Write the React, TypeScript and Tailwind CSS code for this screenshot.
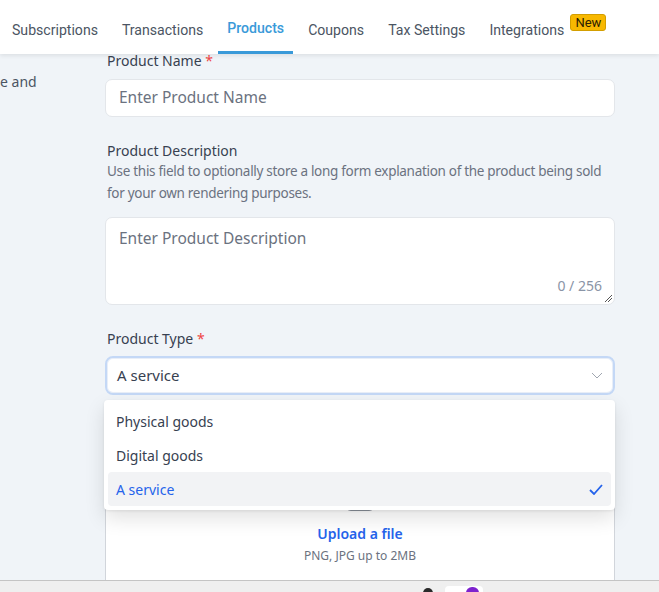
import React from "react";

const tabs = ["Subscriptions", "Transactions", "Products", "Coupons", "Tax Settings", "Integrations"];

export default function App() {
  return (
    <div className="relative h-[592px] w-[659px] overflow-hidden bg-[#f0f4f8]" style={{ fontFamily: '"Noto Sans", sans-serif' }}>
      <nav
        className="relative z-10 flex h-[54px] items-stretch bg-white pl-[3px] shadow-[0_2px_4px_rgba(0,0,0,0.08)] gap-[6px]"
        style={{ fontFamily: "Roboto, sans-serif" }}
      >
        {tabs.map((t) => (
          <div
            key={t}
            className={
              "relative flex items-center px-[9px] text-[14.1px] " +
              (t === "Products" ? "font-medium text-[#3a9ad9] border-b-[3px] border-[#3a9ad9] pt-[6px]" : "text-[#4b5563] pt-[8px]")
            }
          >
            {t}
            {t === "Integrations" && (
              <span className="absolute left-[90px] top-[14px] rounded-[3px] border border-[#d39e00] bg-[#f8b800] px-[4px] text-[13px] leading-[15px] text-[#2b2100]">
                New
              </span>
            )}
          </div>
        ))}
      </nav>

      <main className="relative mt-[-3px] flex">
        <div className="w-[105px] shrink-0 overflow-hidden">
          <div className="mt-[20px] whitespace-nowrap text-[14px] leading-[22px] text-[#4b5563]">e and</div>
        </div>
        <div className="w-[510px] shrink-0">
          <label className="block pl-[2px] text-[14px] leading-[20px] text-[#374151]">
            Product Name <span className="text-[#ef4444]">*</span>
          </label>
          <div className="mt-[8px] flex h-[38px] items-center rounded-[7px] border border-[#e3e6ea] bg-white px-[13px] text-[15.5px] text-[#6b7280]">
            Enter Product Name
          </div>

          <label className="mt-[24px] block pl-[2px] text-[14px] leading-[20px] text-[#374151]">Product Description</label>
          <p className="mt-[-1px] pl-[2px] text-[13.5px] leading-[22px] tracking-[-0.3px] text-[#6b7280]">
            Use this field to optionally store a long form explanation of the product being sold for your own rendering purposes.
          </p>
          <div className="relative mt-[13px] h-[88px] rounded-[7px] border border-[#e3e6ea] bg-white px-[13px] pt-[9px] text-[15.5px] text-[#6b7280]">
            Enter Product Description
            <span className="absolute bottom-[8px] right-[12px] text-[14px] text-[#8a94a6]">0 / 256</span>
            <svg className="absolute bottom-[1px] right-[1px]" width="9" height="9" viewBox="0 0 9 9">
              <line x1="1" y1="8" x2="8" y2="1" stroke="#555" strokeWidth="1" />
              <line x1="4" y1="8" x2="8" y2="4" stroke="#555" strokeWidth="1" />
            </svg>
          </div>

          <label className="mt-[24px] block pl-[2px] text-[14px] leading-[20px] text-[#374151]">
            Product Type <span className="text-[#ef4444]">*</span>
          </label>
          <div className="relative mt-[7px]">
            <div className="flex h-[39px] items-center justify-between rounded-[8px] border-2 border-[#c4d8f6] bg-white pl-[10px] pr-[10px] text-[15px] text-[#374151] shadow-[inset_0_0_0_1px_#e8eef8]">
              A service
              <svg width="12" height="7" viewBox="0 0 12 7">
                <polyline points="1,1 6,6 11,1" fill="none" stroke="#a0a6b0" strokeWidth="1" />
              </svg>
            </div>

            <div className="mt-[24px] h-[20px]" />
            <div className="mt-[8px] flex h-[160px] flex-col items-center rounded-[7px] border border-[#d1d5db] bg-white pt-[15px]">
              <div className="h-[48px] w-[30px] rounded-b-[6px] bg-[#8b919b]" />
              <div className="mt-[13px] text-[14px] font-semibold leading-[20px] text-[#2563eb]">Upload a file</div>
              <div className="mt-[4px] text-[12px] leading-[16px] text-[#6b7280]">PNG, JPG up to 2MB</div>
            </div>

            <div className="absolute left-[-1px] right-0 top-[44px] z-20 rounded-[4px] bg-white p-[4px] shadow-[0_8px_20px_rgba(0,0,0,0.12),0_1px_3px_rgba(0,0,0,0.08)]">
              {["Physical goods", "Digital goods", "A service"].map((o) => {
                const sel = o === "A service";
                return (
                  <div
                    key={o}
                    className={
                      "flex h-[34px] items-center justify-between rounded-[4px] px-[8px] text-[14px] " +
                      (sel ? "bg-[#f2f3f5] text-[#2563eb]" : "text-[#374151]")
                    }
                  >
                    {o}
                    {sel && (
                      <svg width="14" height="11" viewBox="0 0 14 11">
                        <polyline points="1,6 5,10 13,1" fill="none" stroke="#2563eb" strokeWidth="1.8" />
                      </svg>
                    )}
                  </div>
                );
              })}
            </div>
          </div>
        </div>
      </main>

      <div className="absolute bottom-0 left-0 right-0 z-30 h-[12px] border-t border-[#c4c4c4] bg-[#efefef]">
        <div className="absolute left-[423px] top-[7px] h-[10px] w-[10px] rounded-full bg-[#2a2a2a]" />
        <div className="absolute left-[445px] top-[5px] h-[12px] w-[38px] rounded-t-[4px] bg-white" />
        <div className="absolute left-[466px] top-[6px] h-[12px] w-[13px] rounded-full bg-[#7e22ce]" />
      </div>
    </div>
  );
}
